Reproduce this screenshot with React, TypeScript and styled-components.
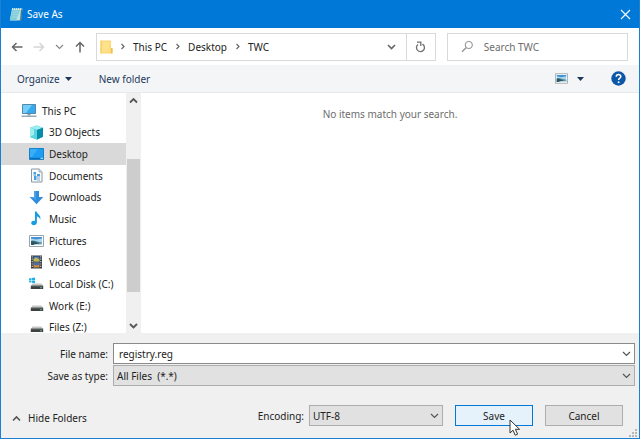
import React from "react";
import styled, { createGlobalStyle } from "styled-components";

const GlobalStyle = createGlobalStyle`
  *, *::before, *::after { box-sizing: border-box; }
  body { margin: 0; background: #fff; }
  button, input, select { font: inherit; color: inherit; margin: 0; }
  button { padding: 0; border: 0; background: none; cursor: default; }
  svg { display: block; flex: none; }
`;

const Dialog = styled.form`
  position: relative;
  display: flex;
  flex-direction: column;
  height: 100vh;
  margin: 0;
  border: 1px solid #1b7fd6;
  border-top: 0;
  background: #fff;
  color: #222;
  font: 10px/16px "Noto Sans", "Open Sans", sans-serif;
  overflow: hidden;
`;

const TitleBar = styled.header`
  display: flex;
  align-items: center;
  gap: 4px;
  flex: none;
  height: 28px;
  padding: 0 8px;
  background: #0078d7;
  color: #fff;
`;

const Title = styled.h1`
  flex: 1;
  margin: 0;
  font-size: 10px;
  font-weight: 400;
`;

const IconButton = styled.button`
  display: flex;
  align-items: center;
  justify-content: center;
  flex: none;
`;

const NavBar = styled.nav`
  display: grid;
  grid-template-columns: 74px 15fr 8fr;
  align-items: center;
  flex: none;
  height: 37px;
  padding: 0 11px 0 10px;
  gap: 11px;
`;

const History = styled.div`
  display: flex;
  align-items: center;
  gap: 10px;
`;

const AddressBar = styled.div`
  display: flex;
  align-items: stretch;
  height: 28px;
  border: 1px solid #d9d9d9;
`;

const Crumbs = styled.div`
  display: flex;
  align-items: center;
  flex: 1;
  padding-left: 3px;
`;

const FolderSlot = styled.span`
  padding-right: 5px;
`;

const Crumb = styled.a`
  color: #222;
  text-decoration: none;
  padding: 0 6px;
`;

const Refresh = styled(IconButton)`
  width: 29px;
  border-left: 1px solid #d9d9d9;
`;

const DropArea = styled(IconButton)`
  width: 28px;
`;

const SearchBox = styled.label`
  display: flex;
  align-items: center;
  gap: 10px;
  min-width: 0;
  height: 28px;
  padding-left: 13px;
  border: 1px solid #d9d9d9;
`;

const SearchInput = styled.input`
  flex: 1;
  min-width: 0;
  padding: 0;
  border: 0;
  outline: 0;
  background: none;
  &::placeholder { color: #6d6d6d; opacity: 1; }
`;

const ToolBar = styled.div`
  display: flex;
  align-items: center;
  flex: none;
  gap: 27px;
  height: 28px;
  padding: 0 13px 0 16px;
  background: #f4f5f7;
  border-bottom: 1px solid #e7e9ec;
  color: #1e395b;
`;

const ToolButton = styled.button`
  display: flex;
  align-items: center;
  gap: 5px;
`;

const ViewButton = styled(ToolButton)`
  gap: 9px;
  margin-left: auto;
`;

const Browser = styled.div`
  display: flex;
  flex: 1;
  min-height: 0;
`;

const TreePane = styled.div`
  width: 125px;
  flex: none;
  padding-top: 7px;
  overflow: hidden;
`;

const Tree = styled.ul`
  display: grid;
  grid-template-rows: repeat(11, 1fr);
  height: 238px;
  margin: 0;
  padding: 0;
  line-height: 12px;
  list-style: none;
`;

const TreeItem = styled.li<{ $root?: boolean; $selected?: boolean }>`
  display: flex;
  align-items: center;
  gap: 5px;
  padding-left: ${(p) => (p.$root ? 20 : 28)}px;
  background: ${(p) => (p.$selected ? "#d9d9d9" : "transparent")};
  white-space: nowrap;
`;

const ScrollBar = styled.div`
  display: flex;
  flex-direction: column;
  flex: none;
  width: 15px;
  padding: 0 1px;
  background: #f0f0f0;
`;

const ScrollArrow = styled(IconButton)`
  height: 15px;
`;

const ScrollTrack = styled.div`
  display: flex;
  flex-direction: column;
  flex: 1;
  padding: 51px 0 26px;
`;

const ScrollThumb = styled.div`
  flex: 1;
  background: #cdcdcd;
`;

const FileList = styled.main`
  flex: 1;
  padding-top: 13px;
  text-align: center;
  color: #6d6d6d;
`;

const Footer = styled.footer`
  flex: none;
  padding: 10px 4px 12px 0;
  background: #f0f0f0;
`;

const Fields = styled.div`
  display: grid;
  grid-template-columns: 107px 1fr;
  column-gap: 5px;
  row-gap: 1px;
  align-items: center;
`;

const FieldLabel = styled.label`
  text-align: right;
`;

const NameBox = styled.div`
  display: flex;
  height: 21px;
  border: 1px solid #8a8a8a;
  background: #fff;
`;

const NameInput = styled.input`
  flex: 1;
  min-width: 0;
  padding: 0 5px;
  border: 0;
  outline: 0;
  background: none;
`;

const NameDrop = styled(IconButton)`
  width: 15px;
`;

const SelectBox = styled.div`
  display: grid;
  align-items: center;
  & > * { grid-area: 1 / 1; }
  & > svg { justify-self: end; margin-right: 4px; pointer-events: none; }
`;

const Select = styled.select`
  appearance: none;
  width: 100%;
  height: 21px;
  padding: 0 20px 0 3px;
  border: 1px solid #adadad;
  border-radius: 0;
  background: #e1e1e1;
  white-space: pre;
`;

const Actions = styled.div`
  display: flex;
  align-items: center;
  margin-top: 19px;
  padding-right: 12px;
  gap: 12px;
`;

const HideFolders = styled.button`
  display: flex;
  align-items: center;
  gap: 7px;
  margin: 5px auto 0 11px;
`;

const Encoding = styled.div`
  display: grid;
  grid-template-columns: auto 134px;
  align-items: center;
  gap: 5px;
`;

const PushButton = styled.button<{ $primary?: boolean }>`
  width: 78px;
  height: 21px;
  border: 1px solid ${(p) => (p.$primary ? "#0078d7" : "#adadad")};
  background: ${(p) => (p.$primary ? "#e5f1fb" : "#e1e1e1")};
`;

const SaveSlot = styled.div`
  position: relative;
  display: flex;
`;

const Pointer = styled.svg`
  position: absolute;
  left: 54px;
  top: 14px;
  pointer-events: none;
`;

const Grip = styled.svg`
  position: absolute;
  right: 2px;
  bottom: 1px;
`;

type Direction = "up" | "down" | "right";

const chevronPaths: Record<Direction, string> = {
  up: "M1 6.5 4.5 3 8 6.5",
  down: "M1 3 4.5 6.5 8 3",
  right: "M3.5 2 6 4.5 3.5 7",
};

function Chevron({ dir = "down", color = "#555", weight = 1.2 }: { dir?: Direction; color?: string; weight?: number }) {
  return (
    <svg width="9" height="9" viewBox="0 0 9 9" fill="none" stroke={color} strokeWidth={weight}>
      <path d={chevronPaths[dir]} />
    </svg>
  );
}

function Caret() {
  return (
    <svg width="7" height="4" viewBox="0 0 7 4" fill="#1e395b">
      <path d="M0 0h7L3.5 4z" />
    </svg>
  );
}

function Arrow({ dir, color }: { dir: "left" | "right" | "up"; color: string }) {
  const d = {
    left: "M11.5 6H1.5M5.5 2 1.5 6l4 4",
    right: "M.5 6h10M6.5 2l4 4-4 4",
    up: "M6 11.5V1.5M2 5.5l4-4 4 4",
  }[dir];
  return (
    <svg width="12" height="12" viewBox="0 0 12 12" fill="none" stroke={color} strokeWidth="1.5">
      <path d={d} />
    </svg>
  );
}

function NotepadIcon() {
  return (
    <svg width="14" height="15" viewBox="0 0 14 15">
      <path d="M3 1.5h10.5L12 13.5H.8z" fill="#b9e4ea" />
      <path d="M3.2 2.5 1 13l6 .5L11.5 2.5z" fill="#83cdd9" />
      <path d="M12 2.5h1.5l-1.2 11L7 14.2l4-.9z" fill="#4b7783" />
      <path d="M3 2h10" stroke="#e7f4ee" strokeWidth="1.6" strokeDasharray="1 1" />
      <path d="M4 5h7M3.6 7.5h7M3.1 10h7" stroke="#a9e0e6" strokeWidth=".6" />
    </svg>
  );
}

function FolderIcon() {
  return (
    <svg width="13" height="16" viewBox="0 0 13 16">
      <path d="M.5 1.5h10.5v7.5h1.5v5.5H.5z" fill="#fbd975" />
      <path d="M.5 1.5h1.2v13H.5z" fill="#f5cf66" />
      <path d="M11 9h1.5v5.5H11z" fill="#edc254" />
      <path d="M2 3h7.5v10H2z" fill="#ffe18a" />
    </svg>
  );
}

function PictureIcon({ small }: { small?: boolean }) {
  return (
    <svg width={small ? 13 : 15} height={small ? 11 : 12} viewBox="0 0 15 12">
      <path d="M.5.5h14v11H.5z" fill="#fff" stroke="#9aa4ac" />
      <path d="M2 2h11v8H2z" fill="#a9d6f3" />
      <path d="M2 2h11v1.5L7 4.5 2 3.5z" fill="#4391d3" />
      <path d="M2 6c3-1.5 5 1 11 1.5V10H2z" fill="#4d8790" />
      <path d="M2 6.5c2.5-1.2 5 1 8 1.7V10H2z" fill="#2f5562" />
      <path d="M5 9.2 13 8.4V10H5z" fill="#b8d9e2" />
    </svg>
  );
}

function DriveIcon({ windows }: { windows?: boolean }) {
  return (
    <svg width="15" height="14" viewBox="0 0 15 14">
      {windows && <path d="M0 1.5 2.5 1v2H0zM3 .9 6 .4V3H3zM0 3.6h2.5v2L0 5.2zM3 3.6h3v2.6l-3-.5z" fill="#18b2e8" />}
      <path d="M3.5 6.5h9L14 9H2z" fill="#c3c5c6" />
      <path d="M1.8 8.7h12.4V12H1.8z" fill="#3d4041" />
      <path d="M2 9h12" stroke="#777b7d" strokeWidth=".7" />
      <path d="M11.3 10.2h1.5v1h-1.5z" fill="#77dc9c" />
    </svg>
  );
}

const treeIcons = {
  pc: (
    <svg width="16" height="15" viewBox="0 0 16 15">
      <path d="M1.5 1.5h13v9h-13z" fill="#37a9ef" stroke="#5288a9" />
      <path d="M2 2h9L5 10H2z" fill="#75cdfa" />
      <path d="M6.5 11h3v1.5h-3z" fill="#8fa2ae" />
      <path d="M.5 13.2h15" stroke="#7895a8" strokeWidth="1.2" />
    </svg>
  ),
  cube: (
    <svg width="15" height="15" viewBox="0 0 15 15">
      <path d="M7.5.5 14 2.8v9L8 14.5 1 12V2.8z" fill="#20b5cb" />
      <path d="M1 2.8 7.5.5 14 2.8 8 5z" fill="#9cecf2" />
      <path d="M8 5l6-2.2v9L8 14.5z" fill="#078da9" />
      <path d="M1 2.8 8 5v9.5L1 12z" fill="#58d5df" />
      <path d="M1 2.8 5 4v5.5L1 12z" fill="#a2edf0" />
    </svg>
  ),
  desktop: (
    <svg width="15" height="12" viewBox="0 0 15 12">
      <path d="M.5.5h14v11H.5z" fill="#1c9df2" stroke="#187fc9" />
      <path d="M1 1h8L3 9H1z" fill="#39aef8" />
      <path d="M1 10.3h13" stroke="#0b63a8" />
      <path d="M11.5 10.3H14" stroke="#d0efff" />
    </svg>
  ),
  documents: (
    <svg width="15" height="15" viewBox="0 0 15 15">
      <path d="M2.5 1h7.7l2.8 2.8V14H2.5z" fill="#f8fbfc" stroke="#8998a2" />
      <path d="M10 1v3h3" fill="#d6dee4" stroke="#8998a2" strokeWidth=".7" />
      <path d="M4.5 4H7v2.5H4.5zM8 6h3v2.5H8zM5 8h2.5v4H5z" fill="#4e9ddb" />
      <path d="M8 10h3M8 12h3M4.5 7.2H7" stroke="#75a9cc" />
    </svg>
  ),
  downloads: (
    <svg width="15" height="15" viewBox="0 0 15 15">
      <path d="M5 1h5v6h4.3L7.5 14.2.7 7H5z" fill="#2f8ddb" />
      <path d="M5 1h2v9L1 7h4z" fill="#4aa1e7" />
    </svg>
  ),
  music: (
    <svg width="15" height="15" viewBox="0 0 15 15">
      <path d="M6 .5h1.7c.3 2.8 4.8 3.5 3.5 8.3-.5-2.1-1.7-3-3.3-3.2v6c0 3.2-5.7 3.4-5.7.5C2.2 10 4.5 9.3 6 10z" fill="#189be5" />
    </svg>
  ),
  pictures: <PictureIcon />,
  videos: (
    <svg width="15" height="14" viewBox="0 0 15 14">
      <path d="M2 .5h11v13H2z" fill="#34383d" />
      <path d="M4.5 1.5h6v5h-6z" fill="#4d79b8" />
      <path d="M4.5 4 7 2.5l3.5 2v2h-6z" fill="#c2b749" />
      <path d="M4.5 7.5h6v5h-6z" fill="#cd8c45" />
      <path d="M4.5 7.5h6v2l-3 1-3-1z" fill="#426db0" />
      <path d="M3.2 1.2v12M11.8 1.2v12" stroke="#d6dadd" strokeWidth="1.1" strokeDasharray="1.2 1.2" />
    </svg>
  ),
  system: <DriveIcon windows />,
  drive: <DriveIcon />,
};

const places: { label: string; icon: keyof typeof treeIcons }[] = [
  { label: "This PC", icon: "pc" },
  { label: "3D Objects", icon: "cube" },
  { label: "Desktop", icon: "desktop" },
  { label: "Documents", icon: "documents" },
  { label: "Downloads", icon: "downloads" },
  { label: "Music", icon: "music" },
  { label: "Pictures", icon: "pictures" },
  { label: "Videos", icon: "videos" },
  { label: "Local Disk (C:)", icon: "system" },
  { label: "Work (E:)", icon: "drive" },
  { label: "Files (Z:)", icon: "drive" },
];

export default function App() {
  return (
    <>
      <GlobalStyle />
      <Dialog onSubmit={(e) => e.preventDefault()}>
        <TitleBar>
          <NotepadIcon />
          <Title>Save As</Title>
          <IconButton type="button" aria-label="Close">
            <svg width="11" height="11" viewBox="0 0 11 11" stroke="#fff" strokeWidth="1.1">
              <path d="m1 1 9 9M10 1l-9 9" />
            </svg>
          </IconButton>
        </TitleBar>

        <NavBar>
          <History>
            <IconButton type="button" aria-label="Back"><Arrow dir="left" color="#666" /></IconButton>
            <IconButton type="button" aria-label="Forward"><Arrow dir="right" color="#d5d5d5" /></IconButton>
            <IconButton type="button" aria-label="Recent locations"><Chevron color="#888" /></IconButton>
            <IconButton type="button" aria-label="Up"><Arrow dir="up" color="#666" /></IconButton>
          </History>
          <AddressBar>
            <Crumbs>
              <FolderSlot><FolderIcon /></FolderSlot>
              {["This PC", "Desktop", "TWC"].map((name) => (
                <React.Fragment key={name}>
                  <Chevron dir="right" color="#666" />
                  <Crumb href="#">{name}</Crumb>
                </React.Fragment>
              ))}
            </Crumbs>
            <DropArea type="button" aria-label="Previous locations"><Chevron color="#666" weight={1.6} /></DropArea>
            <Refresh type="button" aria-label="Refresh">
              <svg width="11" height="12" viewBox="0 0 11 12" fill="none" stroke="#707070" strokeWidth="1.3">
                <path d="M7.5 3.1A4 4 0 1 1 3 3.4" />
                <path d="M2 1.2h3.8v3.9" />
              </svg>
            </Refresh>
          </AddressBar>
          <SearchBox>
            <svg width="13" height="13" viewBox="0 0 13 13" fill="none" stroke="#8c8c8c">
              <circle cx="7.8" cy="5" r="3.6" />
              <path d="M5.2 7.6 1 11.8" strokeWidth="1.3" />
            </svg>
            <SearchInput type="search" placeholder="Search TWC" aria-label="Search TWC" />
          </SearchBox>
        </NavBar>

        <ToolBar>
          <ToolButton type="button">Organize <Caret /></ToolButton>
          <ToolButton type="button">New folder</ToolButton>
          <ViewButton type="button" aria-label="Change your view"><PictureIcon small /><Caret /></ViewButton>
          <IconButton type="button" aria-label="Help">
            <svg width="15" height="15" viewBox="0 0 15 15">
              <circle cx="7.5" cy="7.5" r="7.2" fill="#0b57a8" />
              <path d="M5.2 5.8c.1-3 4.8-2.9 4.6-.2-.1 1.6-2.2 1.6-2.2 3.5" fill="none" stroke="#fff" strokeWidth="1.5" />
              <circle cx="7.6" cy="11.2" r="1" fill="#fff" />
            </svg>
          </IconButton>
        </ToolBar>

        <Browser>
          <TreePane>
            <Tree>
              {places.map((p, i) => (
                <TreeItem key={p.label} $root={i === 0} $selected={p.label === "Desktop"}>
                  {treeIcons[p.icon]}
                  {p.label}
                </TreeItem>
              ))}
            </Tree>
          </TreePane>
          <ScrollBar>
            <ScrollArrow type="button" aria-label="Scroll up"><Chevron dir="up" weight={1.8} /></ScrollArrow>
            <ScrollTrack><ScrollThumb /></ScrollTrack>
            <ScrollArrow type="button" aria-label="Scroll down"><Chevron weight={1.8} /></ScrollArrow>
          </ScrollBar>
          <FileList>No items match your search.</FileList>
        </Browser>

        <Footer>
          <Fields>
            <FieldLabel htmlFor="file-name">File name:</FieldLabel>
            <NameBox>
              <NameInput id="file-name" defaultValue="registry.reg" />
              <NameDrop type="button" aria-label="Recent file names"><Chevron /></NameDrop>
            </NameBox>
            <FieldLabel htmlFor="file-type">Save as type:</FieldLabel>
            <SelectBox>
              <Select id="file-type"><option>{"All Files\u00a0 (*.*)"}</option></Select>
              <Chevron />
            </SelectBox>
          </Fields>
          <Actions>
            <HideFolders type="button"><Chevron dir="up" weight={1.6} />Hide Folders</HideFolders>
            <Encoding>
              <label htmlFor="encoding">Encoding:</label>
              <SelectBox>
                <Select id="encoding"><option>UTF-8</option></Select>
                <Chevron />
              </SelectBox>
            </Encoding>
            <SaveSlot>
              <PushButton type="submit" $primary>Save</PushButton>
              <Pointer width="12" height="18" viewBox="0 0 12 18">
                <path d="M1 1v13l3-2.8 2.2 5 2.4-1-2.2-4.9h4.2z" fill="#fff" stroke="#333" />
              </Pointer>
            </SaveSlot>
            <PushButton type="button">Cancel</PushButton>
          </Actions>
        </Footer>
        <Grip width="8" height="8" viewBox="0 0 8 8" fill="#b8b8b8">
          <path d="M6 0h2v2H6zM3 3h2v2H3zM6 3h2v2H6zM0 6h2v2H0zM3 6h2v2H3zM6 6h2v2H6z" />
        </Grip>
      </Dialog>
    </>
  );
}
